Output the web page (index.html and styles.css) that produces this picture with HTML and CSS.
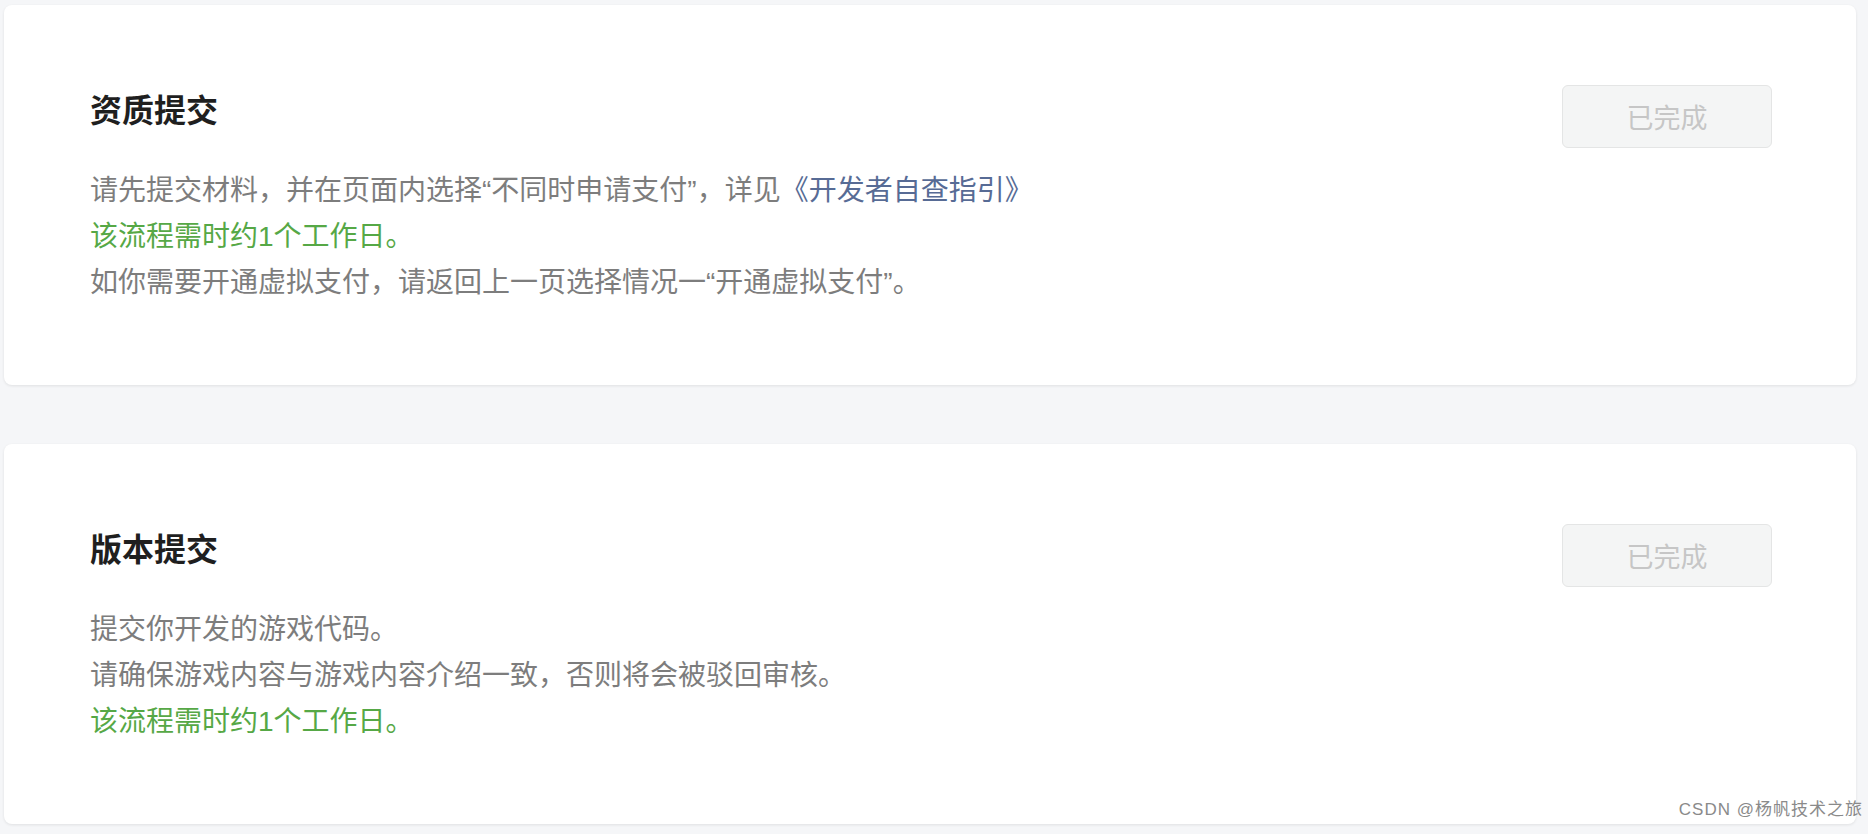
FILE: index.html
```html
<!DOCTYPE html>
<html lang="zh-CN">
<head>
<meta charset="utf-8">
<title>提交</title>
<link rel="stylesheet" href="styles.css">
</head>
<body>
<div class="page">
  <section class="card">
    <div class="card-main">
      <h2 class="card-title">资质提交</h2>
      <div class="card-desc">
        <p class="line">请先提交材料，并在页面内选择“不同时申请支付”，详见<a class="link" href="#">《开发者自查指引》</a></p>
        <p class="line line-green">该流程需时约1个工作日。</p>
        <p class="line">如你需要开通虚拟支付，请返回上一页选择情况一“开通虚拟支付”。</p>
      </div>
    </div>
    <button class="btn-done" type="button" disabled>已完成</button>
  </section>
  <section class="card">
    <div class="card-main">
      <h2 class="card-title">版本提交</h2>
      <div class="card-desc">
        <p class="line">提交你开发的游戏代码。</p>
        <p class="line">请确保游戏内容与游戏内容介绍一致，否则将会被驳回审核。</p>
        <p class="line line-green">该流程需时约1个工作日。</p>
      </div>
    </div>
    <button class="btn-done" type="button" disabled>已完成</button>
  </section>
  <div class="watermark">CSDN @杨帆技术之旅</div>
</div>
</body>
</html>
```
FILE: styles.css
```css
html, body {
  margin: 0;
  padding: 0;
  background: #f5f6f8;
}

body {
  font-family: "Liberation Sans", "Noto Sans CJK SC", sans-serif;
  color: #222;
}

.page {
  position: relative;
  height: 834px;
  box-sizing: border-box;
  padding: 5px 12px 0 4px;
  display: flex;
  flex-direction: column;
  gap: 59px;
}

.card {
  background: #fff;
  border-radius: 8px;
  box-shadow: 0 1px 3px rgba(0, 0, 0, 0.09);
  padding: 84px 84px 79px 86px;
  display: flex;
  justify-content: space-between;
  align-items: flex-start;
}

.card-title {
  margin: 0;
  font-size: 32px;
  line-height: 44px;
  font-weight: 700;
  color: #1f1f1f;
}

.card-desc {
  margin-top: 35px;
}

.line {
  margin: 0;
  font-size: 28px;
  line-height: 46px;
  color: #7d7d7d;
}

.line-green {
  color: #56a846;
}

.link {
  color: #576b95;
  text-decoration: none;
}

.btn-done {
  margin-top: -4px;
  width: 210px;
  height: 63px;
  box-sizing: border-box;
  border: 1px solid #e4e5e5;
  border-radius: 6px;
  background: #f4f5f5;
  color: #c6c6c6;
  font-family: "Liberation Sans", "Noto Sans CJK SC", sans-serif;
  font-size: 27px;
  padding: 0;
}

.watermark {
  position: absolute;
  right: 5px;
  bottom: 14px;
  font-size: 17px;
  color: #8a8a8a;
  letter-spacing: 1px;
}
```
